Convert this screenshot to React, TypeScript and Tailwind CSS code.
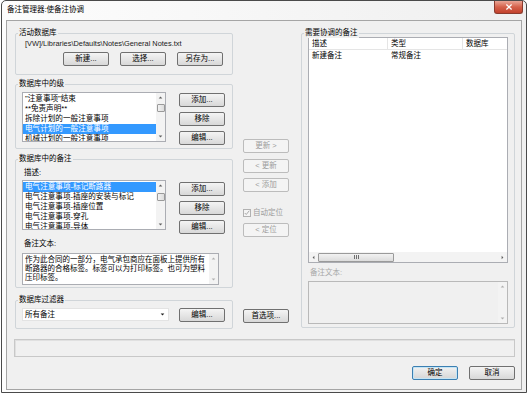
import React from 'react';

type BtnProps = { label: string; disabled?: boolean; primary?: boolean; className?: string };

const Btn: React.FC<BtnProps> = ({ label, disabled, primary, className = '' }) => (
  <div
    className={`flex h-[14px] w-[46px] shrink-0 items-center justify-center rounded-[2px] border text-[7.5px] leading-none ${
      disabled
        ? 'border-[#bcbcbc] bg-[#f4f4f4] text-[#9c9c9c]'
        : primary
        ? 'border-[#3c7fb1] bg-linear-to-b from-[#f2f2f2] to-[#d6d6d6] text-black shadow-[inset_0_0_0_1px_#c4e5f6]'
        : 'border-[#707070] bg-linear-to-b from-[#f4f4f4] to-[#d8d8d8] text-black'
    } ${className}`}
  >
    {label}
  </div>
);

const Arrow: React.FC<{ dir: 'up' | 'down' | 'left' | 'right'; color?: string }> = ({ dir, color = '#606060' }) => {
  const pts = {
    up: '0,4 3,1 6,4',
    down: '0,1 3,4 6,1',
    left: '4,0 1,3 4,6',
    right: '1,0 4,3 1,6',
  }[dir];
  const vb = dir === 'up' || dir === 'down' ? '0 0 6 5' : '0 0 5 6';
  const size = dir === 'up' || dir === 'down' ? 'h-[3px] w-[5px]' : 'h-[5px] w-[3px]';
  return (
    <svg viewBox={vb} className={size}>
      <polygon points={pts} fill={color} />
    </svg>
  );
};

const VScroll: React.FC<{ thumbTop?: number; thumbH?: number; faded?: boolean }> = ({ thumbTop, thumbH, faded }) => (
  <div className="flex w-[9px] shrink-0 flex-col items-center bg-[#f3f3f3]">
    <div className="flex h-[9px] items-center">
      <Arrow dir="up" color={faded ? '#b0b0b0' : '#606060'} />
    </div>
    {thumbH ? (
      <div
        className="w-[8px] rounded-[1px] border border-[#9a9a9a] bg-linear-to-r from-[#f2f2f2] to-[#dcdcdc]"
        style={{ marginTop: thumbTop, height: thumbH }}
      />
    ) : null}
    <div className="flex-1" />
    <div className="flex h-[9px] items-center">
      <Arrow dir="down" color={faded ? '#b0b0b0' : '#606060'} />
    </div>
  </div>
);

const Group: React.FC<{ title: string; className?: string; titleClass?: string; children?: React.ReactNode }> = ({
  title,
  className = '',
  titleClass = '',
  children,
}) => (
  <div className={`relative rounded-[2px] border border-[#d0d5d9] ${className}`}>
    <span className={`absolute -top-[6px] left-[2px] bg-[#f0f0f0] px-[1px] text-[7.5px] leading-[10px] ${titleClass}`}>
      {title}
    </span>
    {children}
  </div>
);

const ListBox: React.FC<{ items: string[]; selected: number; className?: string; thumbTop: number }> = ({
  items,
  selected,
  className = '',
  thumbTop,
}) => (
  <div className={`flex overflow-hidden border border-[#abadb3] bg-white ${className}`}>
    <div className="flex-1 overflow-hidden pt-[1px]">
      {items.map((t, i) => (
        <div
          key={i}
          className={`h-[10px] whitespace-nowrap pl-[2px] text-[7.6px] leading-[10px] ${
            i === selected ? 'bg-[#3399ff] text-white' : 'text-black'
          }`}
        >
          {t}
        </div>
      ))}
    </div>
    <VScroll thumbTop={thumbTop} thumbH={8} />
  </div>
);

const Checkbox: React.FC = () => (
  <div className="flex h-[8px] w-[8px] items-center justify-center border border-[#b1b1b1] bg-[#f4f4f4]">
    <svg viewBox="0 0 8 8" className="h-[6px] w-[6px]">
      <polyline points="1,4 3,6 7,1" fill="none" stroke="#a8a8a8" strokeWidth="1.3" />
    </svg>
  </div>
);

export default function App() {
  const levels = ['"注意事项"结束', '**免责声明**', '拆除计划的一般注意事项', '电气计划的一般注意事项', '机械计划的一般注意事项'];
  const notes = ['电气注意事项-标记断路器', '电气注意事项-插座的安装与标记', '电气注意事项-插座位置', '电气注意事项-穿孔', '电气注意事项-导体'];

  return (
    <div className="h-[394px] w-[529px] overflow-hidden bg-white font-['Liberation_Sans','Noto_Sans_CJK_SC',sans-serif] text-black">
      <div className="ml-[1px] flex h-[393px] w-[526px] flex-col rounded-t-[5px] border border-[#4a4a4a] bg-linear-to-r from-[#fdfdfd] via-[#f6f6f6] to-[#efefef] px-[4px] pb-[2px]">
        {/* title bar */}
        <div className="-mx-[4px] flex h-[19px] shrink-0 items-start justify-between pl-[5px] pr-[3px]">
          <span className="mt-[4px] text-[7.5px] leading-[10px]">备注管理器:使备注协调</span>
          <div className="flex h-[13px] w-[29px] items-center justify-center rounded-b-[3px] border border-t-0 border-[#8a3b2e] bg-linear-to-b from-[#e9a596] via-[#d5614b] to-[#c2412c]">
            <svg viewBox="0 0 10 8" className="h-[6px] w-[8px]">
              <path d="M1.5 0.8 L8.5 7.2 M8.5 0.8 L1.5 7.2" stroke="white" strokeWidth="1.8" />
            </svg>
          </div>
        </div>

        {/* client area */}
        <div className="flex flex-1 flex-col border border-[#a5a5a5] bg-[#f0f0f0] pl-[8px] pr-[6px] pt-[12px]">
          <div className="flex">
            {/* left column */}
            <div className="flex w-[218px] flex-col">
              <Group title="活动数据库" className="h-[42px]">
                <div className="pl-[9px] pt-[5px] text-[7.4px] leading-[10px] text-[#202020]">
                  [VW]/Libraries\Defaults\Notes\General Notes.txt
                </div>
                <div className="mt-[3px] flex justify-end gap-[11px] pr-[9px]">
                  <Btn label="新建..." />
                  <Btn label="选择..." />
                  <Btn label="另存为..." />
                </div>
              </Group>

              <Group title="数据库中的级" className="mt-[9px] h-[65px]">
                <div className="flex pl-[6px] pt-[7px]">
                  <ListBox items={levels} selected={3} thumbTop={2} className="h-[50px] w-[144px]" />
                  <div className="ml-[13px] mt-[1px] flex flex-col gap-[5px]">
                    <Btn label="添加..." />
                    <Btn label="移除" />
                    <Btn label="编辑..." />
                  </div>
                </div>
              </Group>

              <Group title="数据库中的备注" className="mt-[10px] h-[129px]">
                <div className="pl-[8px] pt-[8px] text-[7.5px] leading-[10px]">描述:</div>
                <div className="mt-[2px] flex pl-[6px]">
                  <ListBox items={notes} selected={0} thumbTop={3} className="h-[50px] w-[144px]" />
                  <div className="ml-[13px] mt-[2px] flex flex-col gap-[5px]">
                    <Btn label="添加..." />
                    <Btn label="移除" />
                    <Btn label="编辑..." />
                  </div>
                </div>
                <div className="mt-[5px] pl-[8px] text-[7.5px] leading-[10px]">备注文本:</div>
                <div className="ml-[6px] mt-[4px] flex h-[32px] w-[197px] border border-[#abadb3] bg-white">
                  <div className="flex-1 px-[2px] pt-[1px] text-[7.5px] leading-[9px] text-black">
                    作为此合同的一部分，电气承包商应在面板上提供所有断路器的合格标签。标签可以为打印标签。也可为塑料压印标签。
                  </div>
                  <VScroll faded />
                </div>
              </Group>

              <Group title="数据库过滤器" className="mt-[12px] h-[29px]">
                <div className="flex pl-[6px] pt-[7px]">
                  <div className="flex h-[13px] w-[147px] items-center justify-between border border-[#e3e3e3] bg-white pl-[2px] pr-[3px]">
                    <span className="text-[7.5px] leading-none">所有备注</span>
                    <Arrow dir="down" color="#202020" />
                  </div>
                  <Btn label="编辑..." className="ml-[10px]" />
                </div>
              </Group>
            </div>

            {/* middle column */}
            <div className="ml-[10px] flex w-[47px] flex-col">
              <Btn label="更新 >" disabled className="mt-[106px]" />
              <Btn label="< 更新" disabled className="mt-[6px]" />
              <Btn label="< 添加" disabled className="mt-[5px]" />
              <div className="mt-[17px] flex items-center gap-[2px]">
                <Checkbox />
                <span className="text-[7.5px] leading-none text-[#9c9c9c]">自动定位</span>
              </div>
              <Btn label="< 定位" disabled className="mt-[6px]" />
              <Btn label="首选项..." className="mt-[72px]" />
            </div>

            {/* right column */}
            <Group title="需要协调的备注" className="ml-[11px] h-[295px] flex-1">
              <div className="px-[6px] pt-[3px]">
                <div className="flex h-[226px] flex-col border border-[#abadb3] bg-white">
                  <div className="flex h-[12px] border-b border-[#e5e5e5] text-[7.5px] leading-[11px]">
                    <div className="w-[79px] border-r border-[#e5e5e5] pl-[3px]">描述</div>
                    <div className="w-[75px] border-r border-[#e5e5e5] pl-[3px]">类型</div>
                    <div className="flex-1 pl-[3px]">数据库</div>
                  </div>
                  <div className="flex h-[12px] text-[7.5px] leading-[12px]">
                    <div className="w-[79px] pl-[3px]">新建备注</div>
                    <div className="w-[75px] pl-[3px]">常规备注</div>
                  </div>
                  <div className="flex-1" />
                  <div className="flex h-[10px] items-center bg-[#f3f3f3]">
                    <div className="flex w-[9px] justify-center">
                      <Arrow dir="left" />
                    </div>
                    <div className="flex h-[9px] w-[76px] items-center justify-center rounded-[1px] border border-[#9a9a9a] bg-linear-to-b from-[#f2f2f2] to-[#dcdcdc]">
                      <div className="flex gap-[1px]">
                        <div className="h-[4px] w-[1px] bg-[#707070]" />
                        <div className="h-[4px] w-[1px] bg-[#707070]" />
                        <div className="h-[4px] w-[1px] bg-[#707070]" />
                      </div>
                    </div>
                    <div className="flex-1" />
                    <div className="flex w-[9px] justify-center">
                      <Arrow dir="right" />
                    </div>
                  </div>
                </div>
                <div className="mt-[5px] pl-[2px] text-[7.5px] leading-[10px] text-[#a8a8a8]">备注文本:</div>
                <div className="mt-[3px] flex h-[43px] border border-[#b9b9b9] bg-[#f0f0f0]">
                  <div className="flex-1" />
                  <VScroll faded />
                </div>
              </div>
            </Group>
          </div>

          {/* status bar */}
          <div className="ml-[-1px] mt-[10px] h-[18px] w-[501px] border border-[#c8c8c8] shadow-[inset_1px_1px_0_#e0e0e0]" />

          {/* dialog buttons */}
          <div className="mt-[9px] flex justify-end gap-[11px]">
            <Btn label="确定" primary />
            <Btn label="取消" />
          </div>
        </div>
      </div>
    </div>
  );
}
